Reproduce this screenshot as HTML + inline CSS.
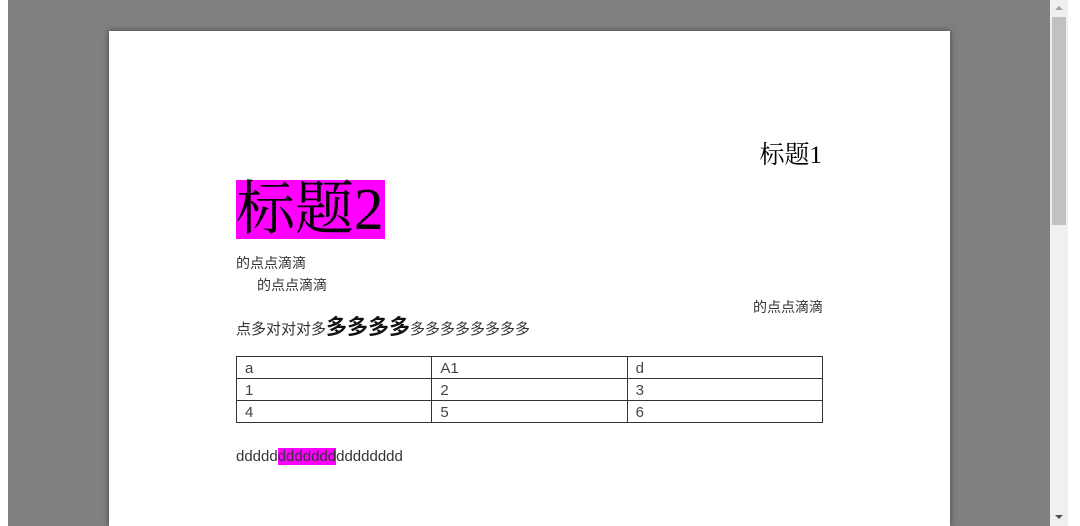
<!DOCTYPE html>
<html style="overflow:hidden;height:526px"><head><meta charset="utf-8"><style>
body{margin:0;width:1080px;height:526px;overflow:hidden;background:#fff;position:relative;font-family:"Liberation Sans","Noto Sans CJK SC",sans-serif;}
.bg{position:absolute;left:8px;top:0;width:1042px;height:526px;background:#808080;overflow:hidden;}
.sb{position:absolute;left:1050px;top:0;width:18px;height:526px;background:#f0f0f0;}
.th{position:absolute;left:2px;top:17px;width:14px;height:208px;background:#c1c1c1;}
.page{position:absolute;left:101px;top:31px;width:841px;height:495px;background:#fff;box-shadow:0 0 6px rgba(0,0,0,.5);}
.a{position:absolute;white-space:nowrap;color:#333;font-size:14px;line-height:18px;}
.s{font-family:"Liberation Serif","Noto Serif CJK SC",serif;color:#000;}
table{position:absolute;left:236px;top:356px;width:587px;border-collapse:collapse;font-size:15px;color:#444;}
td{border:1px solid #333;height:19px;padding:2px 8px 0;line-height:19px;width:33%;box-sizing:content-box;}
</style></head><body>
<div class="bg"><div class="page"></div></div>
<div class="sb"><div class="th"></div>
<div style="position:absolute;left:5px;top:6px;width:0;height:0;border-left:4px solid transparent;border-right:4px solid transparent;border-bottom:4px solid #a3a3a3"></div>
<div style="position:absolute;left:5px;top:515px;width:0;height:0;border-left:4px solid transparent;border-right:4px solid transparent;border-top:4px solid #505050"></div></div>
<div class="a s" style="right:258px;top:141px;font-size:25px;line-height:30px;">标题1</div>
<div class="a s" style="left:236px;top:180px;font-size:59px;line-height:59px;background:#f0f;padding-right:1px;">标题2</div>
<div class="a" style="left:236px;top:254px;">的点点滴滴</div>
<div class="a" style="left:257px;top:276px;">的点点滴滴</div>
<div class="a" style="right:257px;top:298px;">的点点滴滴</div>
<div class="a" style="left:236px;top:316px;line-height:24px;font-size:15px;">点多对对对多<b style="font-size:21px;color:#111">多多多多</b>多多多多多多多多</div>
<table><tr><td>a</td><td>A1</td><td>d</td></tr><tr><td>1</td><td>2</td><td>3</td></tr><tr><td>4</td><td>5</td><td>6</td></tr></table>
<div class="a" style="left:236px;top:448px;font-size:15px;">ddddd<span style="background:#f0f">ddddddd</span>dddddddd</div>
</body></html>
